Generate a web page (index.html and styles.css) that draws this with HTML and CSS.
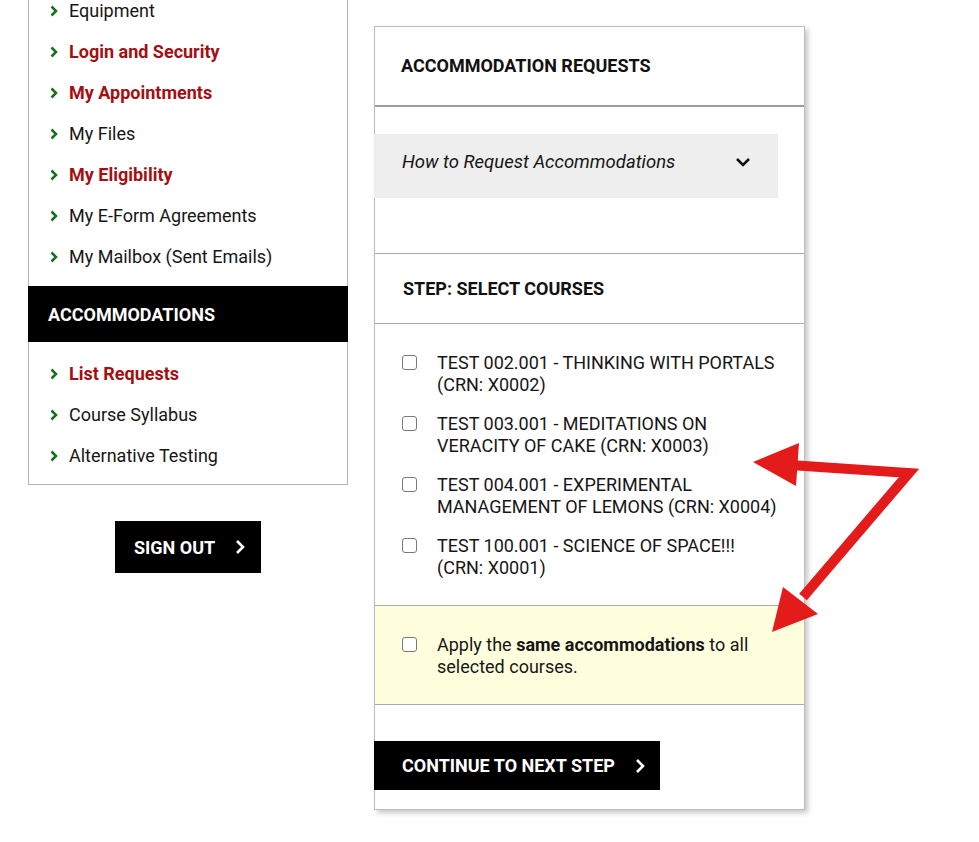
FILE: index.html
```html
<!DOCTYPE html>
<html lang="en">
<head>
<meta charset="utf-8">
<title>Accommodation Requests</title>
<link rel="stylesheet" href="styles.css">
</head>
<body>
<div class="page">
  <aside class="sidebar">
    <div class="side-panel">
      <ul class="menu">
        <li><svg class="chev" viewBox="0 0 8 12"><polyline points="1.5,1.5 6,6 1.5,10.5"/></svg><a class="plain">Equipment</a></li>
        <li><svg class="chev" viewBox="0 0 8 12"><polyline points="1.5,1.5 6,6 1.5,10.5"/></svg><a class="hot">Login and Security</a></li>
        <li><svg class="chev" viewBox="0 0 8 12"><polyline points="1.5,1.5 6,6 1.5,10.5"/></svg><a class="hot">My Appointments</a></li>
        <li><svg class="chev" viewBox="0 0 8 12"><polyline points="1.5,1.5 6,6 1.5,10.5"/></svg><a class="plain">My Files</a></li>
        <li><svg class="chev" viewBox="0 0 8 12"><polyline points="1.5,1.5 6,6 1.5,10.5"/></svg><a class="hot">My Eligibility</a></li>
        <li><svg class="chev" viewBox="0 0 8 12"><polyline points="1.5,1.5 6,6 1.5,10.5"/></svg><a class="plain">My E-Form Agreements</a></li>
        <li><svg class="chev" viewBox="0 0 8 12"><polyline points="1.5,1.5 6,6 1.5,10.5"/></svg><a class="plain">My Mailbox (Sent Emails)</a></li>
      </ul>
      <div class="side-head">ACCOMMODATIONS</div>
      <ul class="menu menu-sub">
        <li><svg class="chev" viewBox="0 0 8 12"><polyline points="1.5,1.5 6,6 1.5,10.5"/></svg><a class="hot">List Requests</a></li>
        <li><svg class="chev" viewBox="0 0 8 12"><polyline points="1.5,1.5 6,6 1.5,10.5"/></svg><a class="plain">Course Syllabus</a></li>
        <li><svg class="chev" viewBox="0 0 8 12"><polyline points="1.5,1.5 6,6 1.5,10.5"/></svg><a class="plain">Alternative Testing</a></li>
      </ul>
    </div>
    <div class="signout-wrap">
      <button class="btn btn-signout">SIGN OUT<svg class="btn-chev" viewBox="0 0 10 16"><polyline points="2,2 8,8 2,14"/></svg></button>
    </div>
  </aside>

  <main class="panel">
    <div class="panel-head">ACCOMMODATION REQUESTS</div>
    <div class="accordion-wrap">
      <div class="accordion">
        <span class="accordion-title">How to Request Accommodations</span>
        <svg class="acc-chev" viewBox="0 0 16 10"><polyline points="2,2 8,8 14,2"/></svg>
      </div>
    </div>
    <div class="step-head">STEP: SELECT COURSES</div>
    <div class="courses">
      <label class="course"><input type="checkbox" class="cb"><span>TEST 002.001 - THINKING WITH PORTALS (CRN: X0002)</span></label>
      <label class="course"><input type="checkbox" class="cb"><span>TEST 003.001 - MEDITATIONS ON VERACITY OF CAKE (CRN: X0003)</span></label>
      <label class="course"><input type="checkbox" class="cb"><span>TEST 004.001 - EXPERIMENTAL MANAGEMENT OF LEMONS (CRN: X0004)</span></label>
      <label class="course"><input type="checkbox" class="cb"><span>TEST 100.001 - SCIENCE OF SPACE!!! (CRN: X0001)</span></label>
    </div>
    <div class="apply">
      <label class="course"><input type="checkbox" class="cb"><span class="apply-text">Apply the <b>same accommodations</b> to all<br>selected courses.</span></label>
    </div>
    <div class="continue-wrap">
      <button class="btn btn-continue">CONTINUE TO NEXT STEP<svg class="btn-chev" viewBox="0 0 10 16"><polyline points="2,2 8,8 2,14"/></svg></button>
    </div>
  </main>
</div>

<svg class="arrows" viewBox="0 0 979 842" width="979" height="842">
  <polyline class="shaft" points="790,465 909,473 803,597"/>
  <polygon class="head" points="753,462 799,443 796,486"/>
  <polygon class="head" points="772,632 783,587 818,614"/>
</svg>
</body>
</html>
```

FILE: styles.css
```css
* { box-sizing: border-box; }

html, body {
  margin: 0;
  padding: 0;
  background: #ffffff;
}

body {
  font-family: Roboto, "Liberation Sans", Arial, sans-serif;
  color: #111111;
  width: 979px;
  height: 842px;
  overflow: hidden;
  position: relative;
}

.page {
  display: flex;
  align-items: flex-start;
  gap: 26px;
  padding-left: 28px;
}

/* ---------- sidebar ---------- */
.sidebar {
  width: 320px;
  display: flex;
  flex-direction: column;
}

.side-panel {
  border: 1px solid #b4b4b4;
  border-top: none;
}

.menu {
  list-style: none;
  margin: 0;
  padding: 0 0 0 21px;
  display: flex;
  flex-direction: column;
  gap: 19px;
  font-size: 18px;
  line-height: 22px;
}

.menu li {
  display: flex;
  align-items: center;
}

.menu:first-child {
  padding-bottom: 18px;
}

.menu-sub {
  padding-top: 21px;
  padding-bottom: 17px;
}

.chev {
  width: 8px;
  height: 12px;
  margin-right: 11px;
  flex: none;
}

.chev polyline {
  fill: none;
  stroke: #17701a;
  stroke-width: 2.5;
}

.plain { color: #161616; }
.hot { color: #a50f12; font-weight: 700; }

.side-head {
  background: #000000;
  color: #ffffff;
  font-weight: 700;
  font-size: 18px;
  height: 56px;
  display: flex;
  align-items: center;
  padding-left: 20px;
  margin: 0 -1px;
}

.signout-wrap {
  display: flex;
  justify-content: center;
  padding-top: 36px;
}

/* ---------- buttons ---------- */
.btn {
  background: #000000;
  color: #ffffff;
  border: none;
  font-family: Roboto, "Liberation Sans", Arial, sans-serif;
  font-weight: 700;
  font-size: 18px;
  display: flex;
  align-items: center;
  cursor: pointer;
  padding: 0;
}

.btn-chev {
  width: 10px;
  height: 16px;
  flex: none;
}

.btn-chev polyline {
  fill: none;
  stroke: #ffffff;
  stroke-width: 2.6;
}

.btn-signout {
  width: 146px;
  height: 52px;
  padding-left: 19px;
  gap: 20px;
}

.btn-continue {
  width: 286px;
  height: 49px;
  padding-left: 28px;
  gap: 20px;
  margin-left: -1px;
}

/* ---------- main panel ---------- */
.panel {
  width: 431px;
  margin-top: 26px;
  border: 1px solid #bdbdbd;
  box-shadow: 3px 3px 5px rgba(0, 0, 0, 0.22);
  background: #ffffff;
}

.panel-head {
  height: 80px;
  display: flex;
  align-items: center;
  padding-left: 26px;
  padding-bottom: 2px;
  font-weight: 700;
  font-size: 18px;
  border-bottom: 2px solid #9d9d9d;
}

.accordion-wrap {
  padding: 27px 26px 55px 0;
  border-bottom: 1px solid #a9a9a9;
}

.accordion {
  background: #eeeeee;
  height: 64px;
  display: flex;
  align-items: flex-start;
  justify-content: space-between;
  padding: 17px 27px 0 28px;
  margin-left: -1px;
}

.accordion-title {
  font-style: italic;
  font-size: 18.5px;
  line-height: 22px;
  color: #161616;
}

.acc-chev {
  width: 16px;
  height: 10px;
  margin-top: 6px;
}

.acc-chev polyline {
  fill: none;
  stroke: #111111;
  stroke-width: 2.6;
}

.step-head {
  height: 70px;
  display: flex;
  align-items: center;
  padding-left: 28px;
  font-weight: 700;
  font-size: 18px;
  border-bottom: 1px solid #a9a9a9;
}

.courses {
  padding: 28px 26px 26px 27px;
  display: flex;
  flex-direction: column;
  gap: 17px;
}

.course {
  display: flex;
  align-items: flex-start;
  font-size: 18px;
  line-height: 22px;
  color: #161616;
}

.cb {
  appearance: none;
  -webkit-appearance: none;
  width: 15px;
  height: 15px;
  margin: 3px 20px 0 0;
  border: 1.5px solid #7a7a7a;
  border-radius: 3px;
  background: #ffffff;
  flex: none;
}

.apply {
  background: #ffffde;
  border-top: 1px solid #a9a9a9;
  border-bottom: 1px solid #a9a9a9;
  padding: 28px 26px 26px 27px;
}

.apply-text b { font-weight: 700; }

.continue-wrap {
  padding: 36px 0 19px 0;
}

/* ---------- annotation arrows ---------- */
.arrows {
  position: absolute;
  left: 0;
  top: 0;
  pointer-events: none;
}

.shaft {
  fill: none;
  stroke: #e41b1b;
  stroke-width: 10;
  stroke-linejoin: miter;
}

.head {
  fill: #e41b1b;
}
```
